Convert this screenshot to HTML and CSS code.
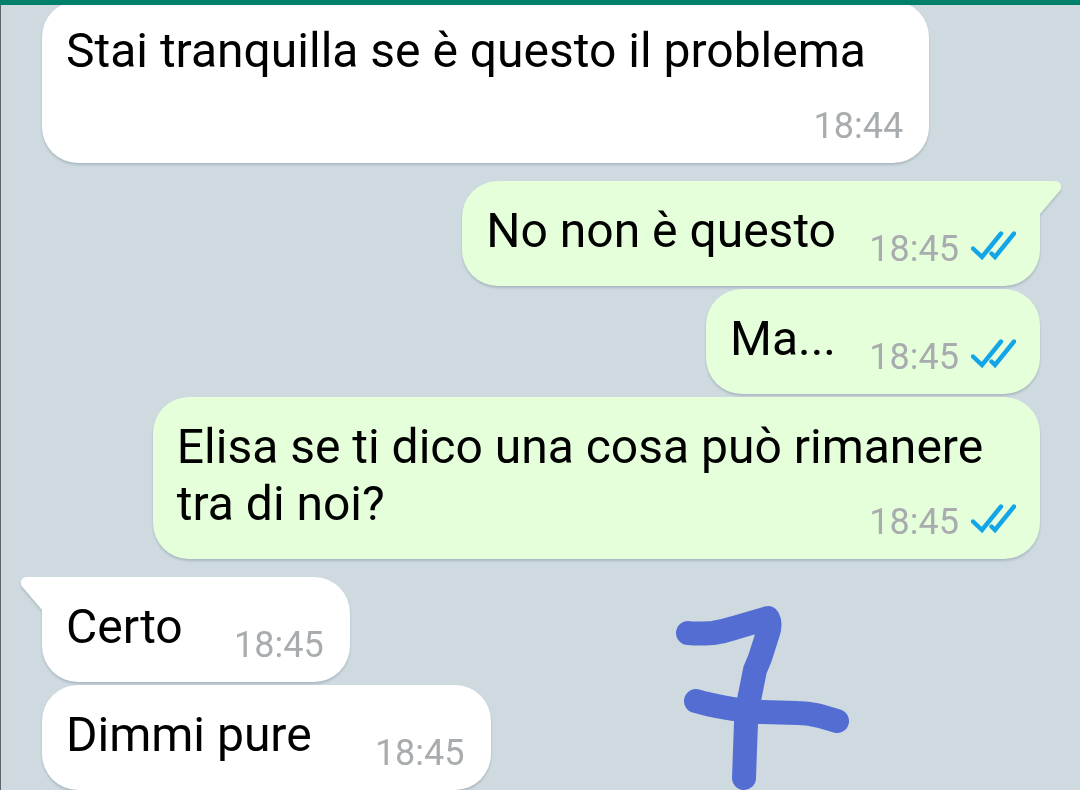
FILE: index.html
```html
<!DOCTYPE html>
<html lang="it">
<head>
  <meta charset="UTF-8" />
  <meta name="viewport" content="width=device-width, initial-scale=1.0"/>
  <title>Chat</title>
  <link rel="stylesheet" href="styles.css">
</head>
<body>
  <svg class="defs" aria-hidden="true">
    <symbol id="ticks" viewBox="0 0 45 29">
      <path d="M2 17.5L11 26L30 2.5M20.5 22.5L24 26L43 2.5" fill="none" stroke="currentColor" stroke-width="4.4" stroke-linecap="round"/>
    </symbol>
    <symbol id="tail" viewBox="0 0 21 33">
      <path d="M0 0H15C20 0 23 5 20 9.5L0 33Z" fill="currentColor"/>
    </symbol>
  </svg>

  <header class="topbar"></header>

  <main class="chat">
    <div class="group">
      <div class="bubble in">
        <p class="text">Stai tranquilla se è questo il problema</p>
        <div class="meta"><time>18:44</time></div>
      </div>
    </div>

    <div class="group">
      <div class="bubble out first">
        <svg class="tail"><use href="#tail"/></svg>
        <p class="text">No non è questo</p>
        <div class="meta"><time>18:45</time><svg class="ticks"><use href="#ticks"/></svg></div>
      </div>
      <div class="bubble out">
        <p class="text">Ma...</p>
        <div class="meta"><time>18:45</time><svg class="ticks"><use href="#ticks"/></svg></div>
      </div>
      <div class="bubble out">
        <p class="text">Elisa se ti dico una cosa può rimanere tra di noi?</p>
        <div class="meta"><time>18:45</time><svg class="ticks"><use href="#ticks"/></svg></div>
      </div>
    </div>

    <div class="group">
      <div class="bubble in first">
        <svg class="tail"><use href="#tail"/></svg>
        <p class="text">Certo</p>
        <div class="meta"><time>18:45</time></div>
      </div>
      <div class="bubble in">
        <p class="text">Dimmi pure&nbsp;</p>
        <div class="meta"><time>18:45</time></div>
      </div>
    </div>

    <!-- hand-drawn number -->
    <svg class="doodle" viewBox="0 0 210 200">
      <path d="M28 43C33 44 44 43.500 53 43C60 42 68 40 74 38L108 28C110 32 110 37 108 43L100 68L95 80L89 110L86 133L84 188"/>
      <path d="M36 111C46 114 56 116 67 118C78 120 89 121 100 122L138 123C150 123 155 125 160 126L177 131"/>
    </svg>
  </main>
</body>
</html>
```

FILE: styles.css
```css
* {
  box-sizing: border-box;
}

body {
  margin: 0;
  font-family: Roboto, sans-serif;
  background: #cfdae0;
  color: #000;
  overflow: hidden;
}

.defs {
  display: none;
}

.topbar {
  position: relative;
  z-index: 1;
  height: 5px;
  background: #00806a;
}

/* the first message is scrolled slightly under the top bar */
.chat {
  position: relative;
  display: flex;
  flex-direction: column;
  gap: 18px;
  min-height: 100vh;
  margin-top: -4px;
  padding: 0 40px 0 41px;
  border-left: 1px solid #5d6468;
}

.group {
  display: flex;
  flex-direction: column;
  gap: 3px;
}

.bubble {
  position: relative;
  display: flex;
  flex-direction: column;
  max-width: 88.9%;
  padding: 21px 24px 16px;
  border-radius: 36px;
  filter: drop-shadow(0 2px 1px rgba(60, 80, 95, 0.24));
}

.in {
  align-self: flex-start;
  background: #fff;
}

.out {
  align-self: flex-end;
  background: #e5ffdb;
}

.in.first {
  border-top-left-radius: 0;
}

.out.first {
  border-top-right-radius: 0;
}

.tail {
  position: absolute;
  top: 0;
  width: 21px;
  height: 33px;
}

.in .tail {
  right: 100%;
  color: #fff;
  transform: scaleX(-1);
}

.out .tail {
  left: 100%;
  color: #e5ffdb;
}

.text {
  margin: 0;
  font-size: 48px;
  line-height: 57px;
}

/* keeps room for the time on the last line */
.text::after {
  content: "";
  display: inline-block;
  width: 143px;
}

.out .text::after {
  width: 180px;
}

.meta {
  display: flex;
  align-self: flex-end;
  align-items: flex-end;
  gap: 12px;
  margin-top: -31px;
  font-size: 36px;
  line-height: 42px;
  color: #a8acae;
}

.in .meta {
  margin-right: 2px;
}

.ticks {
  width: 45px;
  height: 29px;
  margin-bottom: 10px;
  color: #12a5e8;
}

.doodle {
  position: absolute;
  right: 210px;
  bottom: 1px;
  width: 210px;
  height: 200px;
  fill: none;
  stroke: #536dd3;
  stroke-width: 24;
  stroke-linecap: round;
  stroke-linejoin: round;
}
```
